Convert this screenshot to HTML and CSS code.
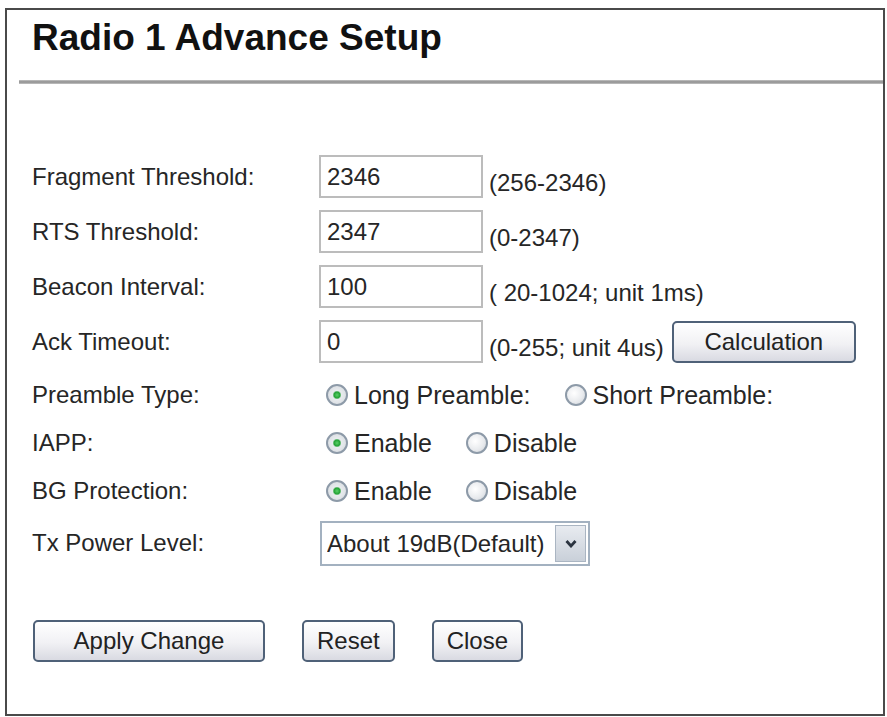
FILE: index.html
```html
<!DOCTYPE html>
<html lang="en">
<head>
<meta charset="utf-8">
<title>Radio 1 Advance Setup</title>
<link rel="stylesheet" href="styles.css">
</head>
<body>
<div class="panel">
	<h1 class="title">Radio 1 Advance Setup</h1>
	<div class="rule"></div>

	<form class="setup">
		<div class="row">
			<label class="label">Fragment Threshold:</label>
			<div class="field">
				<input class="text" type="text" value="2346">
				<span class="hint">(256-2346)</span>
			</div>
		</div>
		<div class="row">
			<label class="label">RTS Threshold:</label>
			<div class="field">
				<input class="text" type="text" value="2347">
				<span class="hint">(0-2347)</span>
			</div>
		</div>
		<div class="row">
			<label class="label">Beacon Interval:</label>
			<div class="field">
				<input class="text" type="text" value="100">
				<span class="hint">( 20-1024; unit 1ms)</span>
			</div>
		</div>
		<div class="row">
			<label class="label">Ack Timeout:</label>
			<div class="field">
				<input class="text" type="text" value="0">
				<span class="hint">(0-255; unit 4us)</span>
				<button type="button" class="btn btn_calc">Calculation</button>
			</div>
		</div>

		<div class="row choice first">
			<label class="label">Preamble Type:</label>
			<div class="field">
				<label class="opt"><input type="radio" name="preamble" checked> Long Preamble:</label>
				<label class="opt"><input type="radio" name="preamble"> Short Preamble:</label>
			</div>
		</div>
		<div class="row choice">
			<label class="label">IAPP:</label>
			<div class="field">
				<label class="opt"><input type="radio" name="iapp" checked> Enable</label>
				<label class="opt"><input type="radio" name="iapp"> Disable</label>
			</div>
		</div>
		<div class="row choice">
			<label class="label">BG Protection:</label>
			<div class="field">
				<label class="opt"><input type="radio" name="bg" checked> Enable</label>
				<label class="opt"><input type="radio" name="bg"> Disable</label>
			</div>
		</div>
		<div class="row power">
			<label class="label">Tx Power Level:</label>
			<div class="field">
				<div class="select">
					<select>
						<option>About 19dB(Default)</option>
					</select>
					<span class="select_arrow">
						<svg width="12" height="9" viewBox="0 0 12 9"><polyline points="1.5,2 6,7 10.5,2" fill="none" stroke="#2b3440" stroke-width="2.8"/></svg>
					</span>
				</div>
			</div>
		</div>

		<div class="actions">
			<button type="button" class="btn btn_apply">Apply Change</button>
			<button type="button" class="btn">Reset</button>
			<button type="button" class="btn">Close</button>
		</div>
	</form>
</div>
</body>
</html>
```

FILE: styles.css
```css
* {
    box-sizing: border-box;
}

body {
    margin: 0;
    padding: 8px 2px 1px 5px;
    background-color: #fff;
    color: #262626;
    font-family: "Liberation Sans", Arial, sans-serif;
}

.panel {
    width: 880px;
    height: 708px;
    border: 2px solid #4a4a4a;
}

.title {
    margin: 8px 0 0 25px;
    font-size: 37px;
    line-height: 40px;
    font-weight: bold;
    color: #111;
}

.rule {
    height: 4px;
    margin: 22px 0 0 12px;
    background: linear-gradient(#c4c4c4, #8e8e8e 50%, #c4c4c4);
}

.setup {
    margin-top: 65px;
    padding-left: 25px;
}

.row {
    display: flex;
    align-items: center;
    height: 55px;
    font-size: 24px;
}

.row.choice {
    height: 48px;
}

.row.first {
    margin-top: 2px;
}

.row.power {
    height: 56px;
}

.label {
    width: 287px;
    flex: none;
}

.field {
    display: flex;
    align-items: center;
}

.text {
    width: 164px;
    height: 43px;
    padding: 0 6px;
    border: 2px solid #bcbcbc;
    background: #fff;
    font-family: inherit;
    font-size: 24px;
    color: #262626;
}

.hint {
    align-self: flex-end;
    margin: 0 0 2px 6px;
    font-size: 24px;
    line-height: 26px;
}

.btn {
    height: 42px;
    padding: 0 13px;
    border: 2px solid #4f6178;
    border-radius: 5px;
    background: linear-gradient(#ffffff, #f1f1f4 55%, #d9dae2);
    font-family: inherit;
    font-size: 24px;
    color: #222;
}

.btn_calc {
    width: 184px;
    margin-left: 8px;
}

.btn_apply {
    width: 232px;
}

.opt {
    display: inline-flex;
    align-items: center;
    gap: 6px;
    margin-right: 34px;
    font-size: 25px;
}

.opt:first-child {
    margin-left: 7px;
}

.opt input {
    appearance: none;
    width: 22px;
    height: 22px;
    margin: 0;
    border: 2px solid #8d9aa8;
    border-radius: 50%;
    background: radial-gradient(circle at 40% 40%, #ffffff, #e9ebee 55%, #cdd2d8);
}

.opt input:checked {
    background: radial-gradient(circle, #58d066 0, #24a236 3px, #e8ebee 4.5px, #dde1e5 70%, #c9ced5);
}

.select {
    display: flex;
    width: 270px;
    height: 45px;
    margin-left: 1px;
    border: 2px solid #a3b1c0;
    background: #fff;
}

.select select {
    flex: 1;
    appearance: none;
    border: none;
    padding: 0 0 0 5px;
    background: transparent;
    font-family: inherit;
    font-size: 24px;
    color: #262626;
    outline: none;
}

.select_arrow {
    display: flex;
    align-items: center;
    justify-content: center;
    width: 31px;
    margin: 2px;
    border: 1px solid #aab5c2;
    background: linear-gradient(#e8ebf0, #c9d0d9);
}

.actions {
    display: flex;
    gap: 37px;
    margin-top: 49px;
    padding-left: 1px;
}
```
